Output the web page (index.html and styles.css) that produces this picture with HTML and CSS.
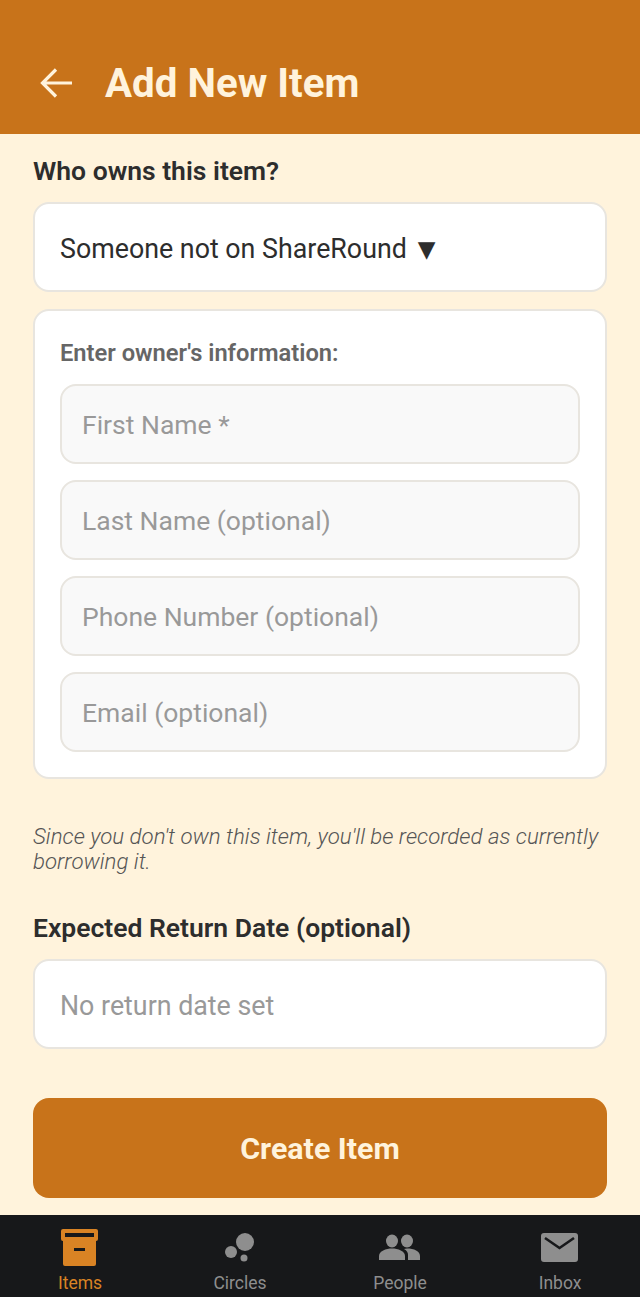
FILE: index.html
```html
<!DOCTYPE html>
<html lang="en">
<head>
  <meta charset="UTF-8">
  <meta name="viewport" content="width=device-width, initial-scale=1.0">
  <title>Add New Item</title>
  <link rel="stylesheet" href="styles.css">
</head>
<body>
  <div class="screen">
    <div class="header">
      <svg class="back-icon" viewBox="0 0 36 36" width="36" height="36">
        <path d="M33 18H4M17 4.500L3.500 18L17 31.500" fill="none" stroke="#fff3dc" stroke-width="3.200"/>
      </svg>
      <h1 class="title">Add New Item</h1>
    </div>

    <div class="content">
      <div class="field-label">Who owns this item?</div>
      <div class="box owner-select">Someone not on ShareRound <span class="caret">▼</span></div>

      <div class="box owner-card">
        <div class="card-label">Enter owner's information:</div>
        <input class="text-input" type="text" placeholder="First Name *">
        <input class="text-input" type="text" placeholder="Last Name (optional)">
        <input class="text-input" type="text" placeholder="Phone Number (optional)">
        <input class="text-input" type="text" placeholder="Email (optional)">
      </div>

      <p class="note">Since you don't own this item, you'll be recorded as currently borrowing it.</p>

      <div class="field-label">Expected Return Date (optional)</div>
      <div class="box date-select">No return date set</div>

      <button class="create-btn">Create Item</button>
    </div>

    <div class="tabbar">
      <div class="tab tab-active">
        <svg viewBox="0 0 40 40" width="40" height="40">
          <path fill="#d98324" fill-rule="evenodd" d="M3 1H36A2 2 0 0 1 38 3V11A2 2 0 0 1 36 13V36A2 2 0 0 1 34 38H5A2 2 0 0 1 3 36V13A2 2 0 0 1 1 11V3A2 2 0 0 1 3 1ZM5 5V9H34V5ZM14 20V23H25V20Z"/>
        </svg>
        <span>Items</span>
      </div>
      <div class="tab">
        <svg viewBox="0 0 40 40" width="40" height="40">
          <circle cx="25" cy="14" r="9" fill="#8e8e8e"/>
          <circle cx="11" cy="24" r="6" fill="#8e8e8e"/>
          <circle cx="24" cy="30" r="3.500" fill="#8e8e8e"/>
        </svg>
        <span>Circles</span>
      </div>
      <div class="tab">
        <svg viewBox="0 0 42 40" width="42" height="40">
          <ellipse cx="13" cy="13" rx="6" ry="6.500" fill="#8e8e8e"/>
          <ellipse cx="28" cy="13" rx="6" ry="6.500" fill="#8e8e8e"/>
          <path fill="#8e8e8e" d="M0 32V28C0 23 7 20.500 13 20.500S26 23 26 28V32Z"/>
          <path fill="#8e8e8e" d="M28 20.500C35 20.500 41 23 41 28V32H29V27C29 24.500 28 22.500 25 21Z"/>
        </svg>
        <span>People</span>
      </div>
      <div class="tab">
        <svg viewBox="0 0 40 40" width="40" height="40">
          <rect x="1" y="5" width="37" height="29" rx="3" fill="#8e8e8e"/>
          <path d="M5 10L19.500 20L34 10" fill="none" stroke="#17181a" stroke-width="2.600"/>
        </svg>
        <span>Inbox</span>
      </div>
    </div>
  </div>
</body>
</html>
```

FILE: styles.css
```css
* {
    box-sizing: border-box;
}

body {
    margin: 0;
    font-family: Roboto, "Liberation Sans", sans-serif;
    background-color: #fff3dc;
}

.screen {
    display: flex;
    flex-direction: column;
    height: 1297px;
}

.header {
    display: flex;
    align-items: center;
    gap: 30px;
    height: 134px;
    padding: 32px 0 0 39px;
    background-color: #c8731a;
}

.title {
    margin: 0;
    font-size: 40.300px;
    font-weight: 700;
    color: #fff3dc;
}

.content {
    flex: 1;
    padding: 20px 33px 0;
}

.field-label {
    font-size: 26.500px;
    font-weight: 600;
    line-height: 34px;
    color: #2d2d2d;
    margin-bottom: 14px;
}

.box {
    background-color: #fff;
    border: 2px solid #e8e5df;
    border-radius: 16px;
}

.owner-select, .date-select {
    display: flex;
    align-items: center;
    height: 90px;
    padding: 3px 25px 0;
    font-size: 26.800px;
    color: #2d2d2d;
}

.date-select {
    color: #999;
}

.caret {
    margin-left: 11px;
    font-family: "DejaVu Sans", sans-serif;
    font-size: 23px;
}

.owner-card {
    margin-top: 17px;
    height: 470px;
    padding: 26px 25px 0;
}

.card-label {
    font-size: 23.700px;
    font-weight: 600;
    line-height: 32px;
    color: #666;
    margin-bottom: 15px;
}

.text-input {
    display: block;
    width: 100%;
    height: 80px;
    margin-bottom: 16px;
    padding: 0 20px;
    font-family: inherit;
    font-size: 26.500px;
    background-color: #f9f9f9;
    border: 2px solid #e8e5df;
    border-radius: 16px;
}

.text-input::placeholder {
    color: #999;
    opacity: 1;
}

.note {
    margin: 45px 0 37px;
    font-size: 22.250px;
    font-style: italic;
    font-weight: 350;
    line-height: 25px;
    color: #555;
}

.create-btn {
    display: block;
    width: 100%;
    height: 100px;
    margin-top: 49px;
    font-family: inherit;
    font-size: 30.400px;
    font-weight: 700;
    color: #fff3dc;
    background-color: #c8731a;
    border: none;
    border-radius: 16px;
}

.tabbar {
    display: flex;
    height: 82px;
    padding-top: 13px;
    background-color: #17181a;
}

.tab {
    flex: 1;
    display: flex;
    flex-direction: column;
    align-items: center;
    gap: 5px;
    font-size: 17.500px;
    line-height: 20px;
    color: #8e8e8e;
}

.tab-active {
    color: #d98324;
}
```
